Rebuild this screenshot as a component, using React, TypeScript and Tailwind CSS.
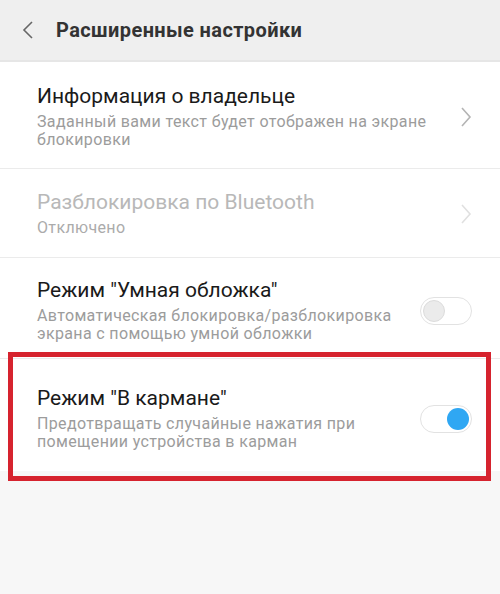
import React from "react";

function Chevron({ light }: { light?: boolean }) {
  return (
    <svg width="12" height="22" viewBox="0 0 12 22" className="shrink-0 ml-[2px]">
      <path d="M2 2 L10 11 L2 20" fill="none" stroke={light ? "#e0e0e0" : "#b4b4b4"} strokeWidth="1.6" />
    </svg>
  );
}

function Toggle({ on }: { on?: boolean }) {
  return (
    <div className="w-[52px] h-[28px] rounded-full border border-[#e2e2e2] bg-white flex items-center px-[2px] shrink-0">
      {on ? (
        <div className="ml-auto w-[22px] h-[22px] rounded-full bg-[#2fa7f3]" />
      ) : (
        <div className="w-[22px] h-[22px] rounded-full bg-[#ebebeb] border border-[#dcdcdc]" />
      )}
    </div>
  );
}

export default function App() {
  const font = { fontFamily: "Roboto, 'Noto Sans', sans-serif" };
  return (
    <div className="relative w-[500px] h-[594px] bg-[#f7f7f7] overflow-hidden" style={font}>
      <div className="h-[62px] bg-[#efefef] border-b-2 border-[#e6e6e6] flex items-center">
        <svg width="12" height="20" viewBox="0 0 12 20" className="ml-[22px]">
          <path d="M10 2 L2 10 L10 18" fill="none" stroke="#666" strokeWidth="1.6" />
        </svg>
        <div className="ml-[22px] text-[20px] font-bold text-[#333] leading-[24px] tracking-[0.4px]">Расширенные настройки</div>
      </div>
      <div className="bg-white">
        <div className="pl-[37px] pr-[28px] pt-[22px] pb-[19px] flex items-center border-b border-[#ebebeb]">
          <div className="flex-1">
            <div className="text-[21px] leading-[24px] text-[#1a1a1a]">Информация о владельце</div>
            <div className="mt-[5px] text-[16px] leading-[18px] tracking-[0.35px] text-[#9c9c9c] pr-[20px]">Заданный вами текст будет отображен на экране блокировки</div>
          </div>
          <Chevron />
        </div>
        <div className="pl-[37px] pr-[28px] pt-[21px] pb-[20px] flex items-center border-b border-[#ebebeb]">
          <div className="flex-1">
            <div className="text-[21px] leading-[24px] text-[#b8b8b8]">Разблокировка по Bluetooth</div>
            <div className="mt-[5px] text-[16px] leading-[18px] tracking-[0.35px] text-[#ababab]">Отключено</div>
          </div>
          <Chevron light />
        </div>
        <div className="pl-[37px] pr-[28px] pt-[20px] pb-[15px] flex items-center border-b border-[#ebebeb]">
          <div className="flex-1">
            <div className="text-[21px] leading-[24px] text-[#1a1a1a]">Режим "Умная обложка"</div>
            <div className="mt-[5px] text-[16px] leading-[18px] tracking-[0.35px] text-[#9c9c9c] pr-[8px]">Автоматическая блокировка/разблокировка экрана с помощью умной обложки</div>
          </div>
          <Toggle />
        </div>
        <div className="pl-[37px] pr-[28px] pt-[27px] pb-[20px] flex items-center">
          <div className="flex-1">
            <div className="text-[21px] leading-[24px] text-[#1a1a1a]">Режим "В кармане"</div>
            <div className="mt-[5px] text-[16px] leading-[18px] tracking-[0.35px] text-[#9c9c9c] pr-[40px]">Предотвращать случайные нажатия при помещении устройства в карман</div>
          </div>
          <Toggle on />
        </div>
      </div>
      <div className="absolute left-[8px] top-[352px] w-[483px] h-[129px] border-[5px] border-[#d6232e]" />
    </div>
  );
}
